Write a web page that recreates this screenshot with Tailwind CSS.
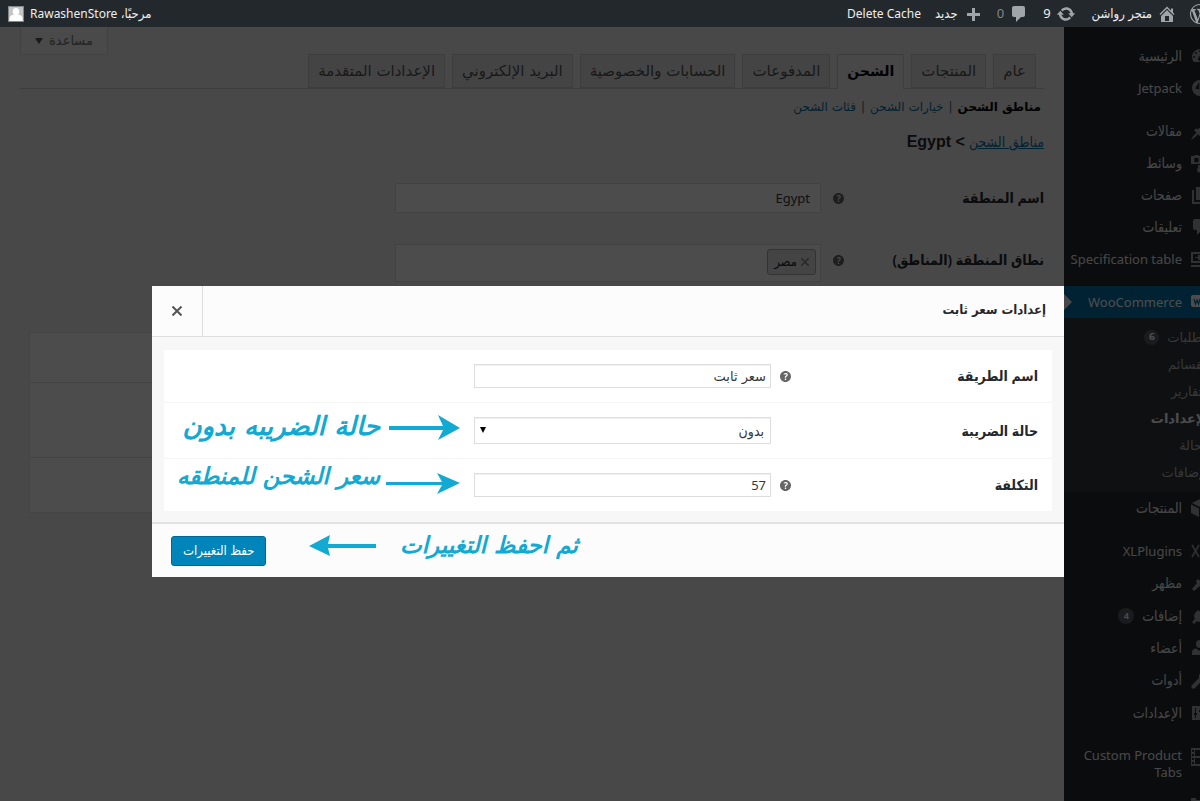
<!DOCTYPE html>
<html lang="ar" dir="ltr">
<head>
    <meta charset="UTF-8">
    <meta name="viewport" content="width=device-width, initial-scale=1.0">
    <title>إعدادات الشحن</title>
    <script src="https://cdn.jsdelivr.net/npm/@tailwindcss/browser@4"></script>
</head>
<body class="overflow-hidden bg-[#f1f1f1] font-['Noto_Sans','DejaVu_Sans_Condensed','DejaVu_Sans',sans-serif] text-[13px] text-[#23282d]">
    <!-- Shared icons -->
    <svg class="hidden">
        <symbol id="help" viewBox="3 3 14 14"><path d="M17 10c0-3.87-3.14-7-7-7-3.87 0-7 3.13-7 7s3.13 7 7 7c3.86 0 7-3.13 7-7zm-6.3 1.48H9.14v-.43c0-.38.08-.7.24-.98s.46-.57.88-.89c.41-.29.68-.53.81-.71.14-.18.2-.39.2-.62 0-.25-.09-.44-.28-.58-.19-.13-.45-.19-.79-.19-.58 0-1.25.19-2 .57l-.64-1.28c.87-.49 1.8-.74 2.77-.74.81 0 1.45.2 1.92.58.48.39.71.91.71 1.55 0 .43-.09.8-.29 1.11-.19.32-.57.67-1.11 1.06-.38.28-.61.49-.71.63-.1.15-.15.34-.15.57v.35zm-1.47 2.74c-.18-.17-.27-.42-.27-.73 0-.33.08-.58.26-.75s.43-.25.77-.25c.32 0 .57.09.75.26s.27.42.27.74c0 .3-.09.55-.27.72-.18.18-.43.27-.75.27-.33 0-.58-.09-.76-.26z"/></symbol>
        <symbol id="comment" viewBox="0 0 20 20"><path d="M5 2h9c1.1 0 2 .9 2 2v7c0 1.1-.9 2-2 2h-2l-5 5v-5H5c-1.1 0-2-.9-2-2V4c0-1.1.9-2 2-2z"/></symbol>
    </svg>

    <div dir="rtl" class="flex min-h-screen w-[calc(100%+24px)] flex-col">
        <!-- Admin bar -->
        <header class="relative z-20 flex h-[27px] items-center justify-between bg-[#23282d] pr-[14px] pl-2 text-[#eee]">
            <nav class="flex items-center">
                <a href="#" aria-label="WordPress"><svg class="size-5 fill-[#a0a5aa]" viewBox="0 0 20 20"><path d="M20 10c0-5.51-4.49-10-10-10C4.48 0 0 4.49 0 10c0 5.52 4.48 10 10 10 5.51 0 10-4.48 10-10zM7.78 15.37L4.37 6.22c.55-.02 1.17-.08 1.17-.08.5-.06.44-1.13-.06-1.11 0 0-1.45.11-2.37.11-.18 0-.37 0-.58-.01C4.12 2.69 6.87 1.11 10 1.11c2.33 0 4.45.87 6.05 2.34-.68-.11-1.65.39-1.65 1.58 0 .74.45 1.36.9 2.1.35.61.55 1.36.55 2.46 0 1.49-1.4 5-1.4 5l-3.03-8.37c.54-.02.82-.17.82-.17.5-.05.44-1.25-.06-1.22 0 0-1.44.12-2.38.12-.87 0-2.33-.12-2.33-.12-.5-.03-.56 1.2-.06 1.22l.92.08 1.26 3.41zM17.41 10c.24-.64.74-1.87.43-4.25.7 1.29 1.05 2.71 1.05 4.25 0 3.29-1.73 6.24-4.4 7.78.97-2.59 1.94-5.2 2.92-7.78zM6.1 18.09C3.12 16.65 1.11 13.53 1.11 10c0-1.3.23-2.48.72-3.59C3.25 10.3 4.67 14.2 6.1 18.09zm4.03-6.63l2.58 6.98c-.86.29-1.76.45-2.71.45-.79 0-1.57-.11-2.29-.33.81-2.38 1.62-4.74 2.42-7.1z"/></svg></a>
                <a href="#" class="mr-[13px] flex items-center gap-[5px]"><svg class="size-5 fill-[#a0a5aa]" viewBox="0 0 20 20"><path d="M16 8.5l1.53 1.53-1.06 1.06L10 4.6l-6.47 6.49-1.06-1.06L10 2.5l4 4v-2h2v4zm-6-2.46l6 5.99V18H4v-5.97zM12 17v-5H8v5h4z"/></svg>متجر رواشن</a>
                <a href="#" class="mr-4 flex items-center gap-[5px]"><svg class="size-5 fill-[#a0a5aa]" viewBox="0 0 20 20"><path d="M10.2 3.28c3.53 0 6.43 2.61 6.92 6h2.08l-3.5 4-3.5-4h2.32c-.45-1.97-2.21-3.45-4.32-3.45-1.45 0-2.73.71-3.54 1.78L4.95 5.66C6.23 4.2 8.11 3.28 10.2 3.28zm-.4 13.44c-3.52 0-6.43-2.61-6.92-6H.8l3.5-4c1.17 1.33 2.33 2.67 3.5 4H5.48c.45 1.97 2.21 3.45 4.32 3.45 1.45 0 2.73-.71 3.54-1.78l1.71 1.95c-1.28 1.46-3.15 2.38-5.25 2.38z"/></svg>9</a>
                <a href="#" class="mr-[14px] flex items-center gap-[5px] text-[#82878c]"><svg class="size-5 fill-[#a0a5aa]"><use href="#comment"/></svg>0</a>
                <a href="#" class="mr-[14px] flex items-center gap-[5px]"><svg class="size-5 fill-[#a0a5aa]" viewBox="0 0 20 20"><path d="M17 9v3h-5v5H9v-5H4V9h5V4h3v5h5z"/></svg>جديد</a>
                <a href="#" class="mr-[14px] text-xs">Delete Cache</a>
            </nav>
            <a href="#" class="flex items-center gap-[6px]">
                <span>مرحبًا، <span class="text-xs">RawashenStore</span></span>
                <svg class="size-4 border border-[#82878c] bg-[#c5c5c5]" viewBox="0 0 16 16"><path fill="#fff" d="M8 1c2.500 0 3.800 1.800 3.800 4 0 1.500-.6 2.800-1.500 3.600 2.800.6 5.200 2 5.200 4.400v3H.5v-3c0-2.400 2.400-3.800 5.200-4.400C4.800 7.800 4.200 6.500 4.200 5c0-2.200 1.300-4 3.800-4z"/></svg>
            </a>
        </header>

        <div class="flex flex-1">
            <!-- Admin menu -->
            <aside class="h-[774px] w-40 shrink-0 overflow-hidden bg-[#23282d] pt-[13px] text-sm text-[#eee]">
                <a href="#" class="flex h-8 items-center gap-2 pr-[14px]"><svg class="size-5 fill-[#a0a5aa]" viewBox="0 0 20 20"><path fill-rule="evenodd" d="M3.760 16h12.480A8 8 0 1 0 3.760 16zM10 4a1 1 0 1 1 0 2 1 1 0 0 1 0-2zM6 6a1 1 0 1 1 0 2 1 1 0 0 1 0-2zm8 0a1 1 0 1 1 0 2 1 1 0 0 1 0-2zM4 10a1 1 0 1 1 0 2 1 1 0 0 1 0-2zm12 0a1 1 0 1 1 0 2 1 1 0 0 1 0-2zm-7.400 1.500L12 7v6a2 2 0 1 1-3.400-1.500z"/></svg>الرئيسية</a>
                <a href="#" class="mb-[11px] flex h-8 items-center gap-2 pr-[14px] text-[13px]"><svg class="size-5 fill-[#a0a5aa]" viewBox="0 0 20 20"><path fill-rule="evenodd" d="M10 2a8 8 0 1 0 0 16 8 8 0 0 0 0-16zM9.300 4v7.500l-4.300-1zm1.400 12V8.500l4.300 1z"/></svg>Jetpack</a>
                <a href="#" class="flex h-8 items-center gap-2 pr-[14px]"><svg class="size-5 fill-[#a0a5aa]" viewBox="0 0 20 20"><path d="M10.440 3.020l1.820-1.820 6.360 6.350-1.830 1.820c-1.050-.68-2.480-.57-3.410.36l-.75.75c-.92.93-1.040 2.350-.35 3.410l-1.830 1.820-2.410-2.410-2.800 2.790c-.42.42-3.380 2.710-3.800 2.290s1.860-3.390 2.280-3.810l2.790-2.790L4.100 9.360l1.830-1.820c1.050.69 2.480.57 3.400-.36l.75-.75c.93-.92 1.050-2.350.36-3.410z"/></svg>مقالات</a>
                <a href="#" class="flex h-8 items-center gap-2 pr-[14px]"><svg class="size-5 fill-[#a0a5aa]" viewBox="0 0 20 20"><path fill-rule="evenodd" d="M2 3h2l1-1h3l1 1h3v8H1V3zm4.500 1.500a2.500 2.500 0 1 0 0 5 2.500 2.500 0 0 0 0-5z"/><path d="M14 6h5v9a2.500 2.500 0 1 1-2-2.400V9h-3zM8 12h4v5a2.500 2.500 0 1 1-4-2z"/></svg>وسائط</a>
                <a href="#" class="flex h-8 items-center gap-2 pr-[14px]"><svg class="size-5 fill-[#a0a5aa]" viewBox="0 0 20 20"><path d="M6 2h12v13H6zM2 5h2v12h11v2H2z"/></svg>صفحات</a>
                <a href="#" class="flex h-8 items-center gap-2 pr-[14px]"><svg class="size-5 fill-[#a0a5aa]"><use href="#comment"/></svg>تعليقات</a>
                <a href="#" class="mb-[11px] flex h-8 items-center gap-2 pr-[14px] text-[13px]"><svg class="size-5 fill-[#a0a5aa]" viewBox="0 0 20 20"><path fill-rule="evenodd" d="M1 3h18v11H1zm2 2v7h14V5z"/><path d="M5 8h3V6h4v5H8V9H5zM1 16h18v2H1z"/></svg><span class="whitespace-nowrap">Specification table</span></a>

                <a href="#" class="relative flex h-8 items-center gap-2 bg-[#0073aa] pr-[14px] text-[13px] text-white"><svg class="size-5" viewBox="0 0 20 20"><path fill="#fff" d="M3 3h18v12h-8l3 4-6-4H3a2 2 0 0 1-2-2V5a2 2 0 0 1 2-2z"/><path fill="none" stroke="#0073aa" stroke-width="1.200" d="M4 7l1.500 5L7 8l1.500 4L10 7m3 1h-2v4h2"/></svg>WooCommerce
                    <svg class="absolute top-2 left-0 h-4 w-2 fill-[#f1f1f1]" viewBox="0 0 8 16"><path d="M0 0l8 8-8 8z"/></svg>
                </a>
                <nav class="flex flex-col bg-[#32373c] py-[6px] pr-[14px] font-['DejaVu_Sans',sans-serif] text-[13px] leading-[27px] text-[#b4b9be]">
                    <a href="#" class="flex items-center gap-2">الطلبات <span class="size-[15px] rounded-full bg-[#555d66] text-center text-[9px] leading-[15px] font-semibold text-white">6</span></a>
                    <a href="#">القسائم</a>
                    <a href="#">التقارير</a>
                    <a href="#" class="font-bold text-white">الإعدادات</a>
                    <a href="#">الحالة</a>
                    <a href="#">الإضافات</a>
                </nav>
                <a href="#" class="mb-[11px] flex h-8 items-center gap-2 pr-[14px]"><svg class="size-5 fill-[#a0a5aa]" viewBox="0 0 20 20"><path d="M10 1l8 4-8 4-8-4zM1 6.500l8 4V19l-8-4zm18 0l-8 4V19l8-4z"/></svg>المنتجات</a>
                <a href="#" class="flex h-8 items-center gap-2 pr-[14px] text-[13px]"><svg class="size-5 stroke-[#a0a5aa]" fill="none" stroke-width="1.500" viewBox="0 0 20 20"><path d="M2 4l7 12M9 4L2 16M12 4v12h6"/></svg>XLPlugins</a>
                <a href="#" class="flex h-8 items-center gap-2 pr-[14px]"><svg class="size-5 fill-[#a0a5aa]" viewBox="0 0 20 20"><path d="M14.500 2l3.500 3.500-5 5L9.500 7zM8 6l6 6-2 2-2-1-6 5-2-2 5-6-1-2z"/></svg>مظهر</a>
                <a href="#" class="flex h-[33px] items-center gap-2 pr-[14px]"><svg class="size-5 fill-[#a0a5aa]" viewBox="0 0 20 20"><path d="M13 2l1.500 1.500L11.500 7 13 8.500 16.500 5 18 6.500 14.500 10l1.500 2-2 2c-2 2-5 2.500-7 1l-3 3-2-2 3-3c-1.500-2-1-5 1-7l2-2 2 1.500z"/></svg>إضافات <span class="size-4 rounded-full bg-[#555d66] text-center text-[9px] leading-4 font-semibold text-white">4</span></a>
                <a href="#" class="flex h-8 items-center gap-2 pr-[14px]"><svg class="size-5 fill-[#a0a5aa]" viewBox="0 0 20 20"><circle cx="10" cy="6" r="4"/><path d="M2 17v-3c0-2 2-3.500 4-3.500l4 2.500 4-2.500c2 0 4 1.500 4 3.500v3z"/></svg>أعضاء</a>
                <a href="#" class="flex h-8 items-center gap-2 pr-[14px]"><svg class="size-5 fill-[#a0a5aa]" viewBox="0 0 20 20"><path d="M16.700 9.800c-1.300 1.300-3.200 1.700-4.800 1.100L5 18c-1 1-2 1-3 0s-1-2 0-3l7-7c-.5-1.600-.1-3.400 1.100-4.700C11.400 2 13.200 1.600 14.800 2l-3 3 .6 2.600 2.600.6 3-3c.4 1.600 0 3.400-1.300 4.600z"/></svg>أدوات</a>
                <a href="#" class="mb-[10px] flex h-[33px] items-center gap-2 pr-[14px]"><svg class="size-5 fill-[#a0a5aa]" viewBox="0 0 20 20"><path fill-rule="evenodd" d="M2 3h16v14H2zm3 2v5H4v2h1v3h1v-3h1v-2H6V5zm5 0v2H9v2h1v6h1V9h1V7h-1V5zm4 0v6h-1v2h1v2h1v-2h1v-2h-1V5z"/></svg>الإعدادات</a>
                <a href="#" class="flex items-start gap-2 py-2 pr-[14px] text-[13px] leading-[17px]"><svg class="size-5 shrink-0 fill-[#a0a5aa]" viewBox="0 0 20 20"><path fill-rule="evenodd" d="M1 1h18v18H1zm4 2v6h10V3zm0 8v6h10v-6zM2 3v2h2V3zm0 4v2h2V7zm0 4v2h2v-2zm0 4v2h2v-2z"/></svg><span class="w-[108px]">Custom Product Tabs</span></a>
                <a href="#" aria-label="المزيد" class="flex items-start py-2 pr-[14px]"><svg class="size-5 fill-[#a0a5aa]" viewBox="0 0 20 20"><path d="M1 1h5v2h8v3h5v13H4V6H1z"/></svg></a>
            </aside>

            <!-- Shipping settings -->
            <main class="min-w-0 flex-1 px-5">
                <div class="flex justify-end">
                    <button type="button" class="flex h-7 items-center gap-[6px] border border-t-0 border-[#ddd] bg-[#f7f7f7] px-[14px] font-['DejaVu_Sans',sans-serif] text-[#72777c]">مساعدة <svg class="h-[6px] w-2 fill-[#50575e]" viewBox="0 0 8 6"><path d="M0 0h8L4 6z"/></svg></button>
                </div>
                <nav class="flex h-[34px] items-end gap-[7px] border-b border-[#ccc] pr-2 font-['DejaVu_Sans',sans-serif] text-[15px] leading-6 text-[#555]">
                    <a href="#" class="h-[34px] border border-[#ccc] bg-[#e5e5e5] px-[9px] py-1">عام</a>
                    <a href="#" class="h-[34px] border border-[#ccc] bg-[#e5e5e5] px-[9px] py-1">المنتجات</a>
                    <a href="#" class="-mb-px h-[35px] border border-b-0 border-[#ccc] bg-[#f1f1f1] px-[9px] py-1 text-sm leading-6 font-bold text-black">الشحن</a>
                    <a href="#" class="h-[34px] border border-[#ccc] bg-[#e5e5e5] px-[9px] py-1">المدفوعات</a>
                    <a href="#" class="h-[34px] border border-[#ccc] bg-[#e5e5e5] px-[9px] py-1">الحسابات والخصوصية</a>
                    <a href="#" class="h-[34px] border border-[#ccc] bg-[#e5e5e5] px-[9px] py-1">البريد الإلكتروني</a>
                    <a href="#" class="h-[34px] border border-[#ccc] bg-[#e5e5e5] px-[9px] py-1">الإعدادات المتقدمة</a>
                </nav>
                <nav class="flex h-9 items-center gap-[5px] pr-[3px] font-['DejaVu_Sans',sans-serif] text-xs text-[#666]">
                    <a href="#" class="font-bold text-black">مناطق الشحن</a> |
                    <a href="#" class="text-[#0073aa]">خيارات الشحن</a> |
                    <a href="#" class="text-[#0073aa]">فئات الشحن</a>
                </nav>
                <h2 class="flex h-[34px] items-center gap-1 font-['Liberation_Sans','DejaVu_Sans_Condensed',sans-serif] text-base font-bold"><a href="#" class="text-sm font-normal text-[#0073aa] underline">مناطق الشحن</a> &gt; Egypt</h2>
                <div class="mt-6 flex items-center">
                    <label for="zone-name" class="w-[200px] text-sm font-semibold">اسم المنطقة</label>
                    <svg class="size-[11px] fill-[#666]"><use href="#help"/></svg>
                    <input id="zone-name" value="Egypt" class="mr-3 h-[30px] w-[426px] border border-[#ddd] bg-white px-[10px] text-[13px] text-[#32373c]">
                </div>
                <div class="mt-[31px] flex items-start">
                    <span class="w-[200px] pt-[6px] text-sm font-semibold">نطاق المنطقة (المناطق)</span>
                    <svg class="mt-[11px] size-[11px] fill-[#666]"><use href="#help"/></svg>
                    <div class="mr-3 flex h-[38px] w-[426px] border border-[#ddd] bg-white p-1">
                        <button type="button" class="flex h-[26px] items-center gap-1 rounded-[3px] border border-[#aaa] bg-[#e4e4e4] px-[6px]"><svg class="size-2 stroke-[#888]" stroke-width="1.500" viewBox="0 0 8 8"><path d="M0 0l8 8M8 0L0 8"/></svg>مصر</button>
                    </div>
                </div>
                <div class="mt-[50px] ml-[9px] border border-[#e5e5e5] bg-white">
                    <div class="h-[50px] border-b border-[#e1e1e1]"></div>
                    <div class="h-[75px] border-b border-[#e1e1e1]"></div>
                    <div class="h-[54px]"></div>
                </div>
            </main>
        </div>
    </div>

    <!-- Backdrop and dialog -->
    <div dir="rtl" class="fixed inset-0 z-10 bg-black/70 pt-[286px] pr-[136px] pl-[152px]">
        <form role="dialog" aria-labelledby="dialog-title" class="relative bg-[#f7f7f7]">
            <header class="flex h-[51px] items-stretch justify-between border-b border-[#ddd] bg-[#fcfcfc] pr-[18px]">
                <h1 id="dialog-title" class="pt-[14px] font-['DejaVu_Sans_Condensed','DejaVu_Sans',sans-serif] text-[13px] font-bold">إعدادات سعر ثابت</h1>
                <button type="button" aria-label="إغلاق" class="flex w-[51px] items-center justify-center border-r border-[#ddd]"><svg class="size-[10px] stroke-[#555]" stroke-width="2" viewBox="0 0 10 10"><path d="M.5 .5l9 9M9.500 .5l-9 9"/></svg></button>
            </header>
            <div class="px-3 pt-[13px] pb-[11px]">
                <div class="flex items-center border-b border-[#f5f5f5] bg-white p-[14px]">
                    <label for="method" class="w-[247px] text-sm font-semibold">اسم الطريقة</label>
                    <svg class="size-[11px] fill-[#666]"><use href="#help"/></svg>
                    <input id="method" value="سعر ثابت" class="mr-[9px] h-6 w-[297px] border border-[#ddd] bg-white px-1 font-['DejaVu_Sans',sans-serif] text-[13px] text-[#32373c] inset-shadow-2xs">
                </div>
                <div class="flex items-center border-b border-[#f5f5f5] bg-white p-[14px]">
                    <label for="tax" class="w-[258px] text-sm font-semibold">حالة الضريبة</label>
                    <div class="relative mr-[9px] w-[297px]">
                        <select id="tax" class="block h-[27px] w-full appearance-none border border-[#ddd] bg-white px-[6px] text-sm text-[#32373c] inset-shadow-2xs"><option>بدون</option></select>
                        <svg class="pointer-events-none absolute top-[10px] left-[6px] size-[6px] fill-black" viewBox="0 0 6 6"><path d="M0 0h6L3 6z"/></svg>
                    </div>
                </div>
                <div class="flex items-center bg-white p-[14px]">
                    <label for="cost" class="w-[247px] text-sm font-semibold">التكلفة</label>
                    <svg class="size-[11px] fill-[#666]"><use href="#help"/></svg>
                    <input id="cost" value="57" class="mr-[9px] h-6 w-[297px] border border-[#ddd] bg-white px-1 text-[13px] text-[#32373c] inset-shadow-2xs">
                </div>
            </div>
            <footer class="flex h-[55px] items-center justify-end border-t-2 border-[#e2e2e2] bg-[#fcfcfc] px-[19px]">
                <button type="submit" class="h-[30px] rounded-[3px] border border-[#006799] bg-[#0085ba] px-[11px] text-[13px] text-white">حفظ التغييرات</button>
            </footer>

            <!-- Notes drawn over the dialog -->
            <div class="pointer-events-none font-['DejaVu_Sans',sans-serif] text-[23px] leading-8 font-bold whitespace-nowrap text-[#12a9d2] italic">
                <p class="absolute top-[124px] right-[684px] text-[26px] leading-8">حالة الضريبه بدون</p>
                <p class="absolute top-[174px] right-[684px]">سعر الشحن للمنطقه</p>
                <p class="absolute top-[243px] left-[248px]">ثم احفظ التغييرات</p>
                <svg class="absolute top-[129px] left-[237px] h-[26px] w-[71px] fill-current" viewBox="0 0 71 26"><path d="M0 11h54L49 0l22 13-22 12 5-10H0z"/></svg>
                <svg class="absolute top-[187px] left-[234px] h-[22px] w-[74px] fill-current" viewBox="0 0 74 22"><path d="M0 9h56L51 0l23 10-23 11 5-9H0z"/></svg>
                <svg class="absolute top-[249px] left-[157px] h-[22px] w-[67px] fill-current" viewBox="0 0 67 22"><path d="M67 9H19l2-9L0 11l21 10-2-8h48z"/></svg>
            </div>
        </form>
    </div>
</body>
</html>
